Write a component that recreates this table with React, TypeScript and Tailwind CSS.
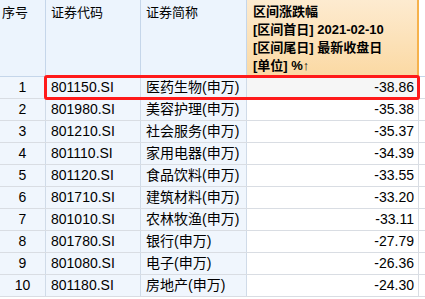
const rows = [
  ['1', '801150.SI', '医药生物(申万)', '-38.86'],
  ['2', '801980.SI', '美容护理(申万)', '-35.38'],
  ['3', '801210.SI', '社会服务(申万)', '-35.37'],
  ['4', '801110.SI', '家用电器(申万)', '-34.39'],
  ['5', '801120.SI', '食品饮料(申万)', '-33.55'],
  ['6', '801710.SI', '建筑材料(申万)', '-33.20'],
  ['7', '801010.SI', '农林牧渔(申万)', '-33.11'],
  ['8', '801780.SI', '银行(申万)', '-27.79'],
  ['9', '801080.SI', '电子(申万)', '-26.36'],
  ['10', '801180.SI', '房地产(申万)', '-24.30'],
];

export default function App() {
  return (
    <div
      className="relative w-[425px] h-[299px] overflow-hidden bg-white text-black"
      style={{ fontFamily: 'Tahoma, "Liberation Sans", "Noto Sans CJK SC", sans-serif' }}
    >
      {/* 表头 */}
      <div className="flex h-[77px] border-b border-[#c5d6ea] text-[13px]">
        <div className="w-[46px] bg-[#ecf4fd] border-r border-[#c5d6ea] pl-[2px] pt-[3px]">序号</div>
        <div className="w-[95px] bg-[#ecf4fd] border-r border-[#c5d6ea] pl-[5px] pt-[3px]">证券代码</div>
        <div className="w-[106px] bg-[#ecf4fd] border-r border-[#c5d6ea] pl-[5px] pt-[3px]">证券简称</div>
        <div className="w-[172px] bg-gradient-to-b from-[#fdebd0] to-[#fbd9a3] border-r-2 border-[#f6b24c] pl-[6px] pt-[3px] font-bold leading-[18px]">
          <div>区间涨跌幅</div>
          <div>[区间首日] 2021-02-10</div>
          <div>[区间尾日] 最新收盘日</div>
          <div>[单位] %↑</div>
        </div>
        <div className="flex-1 bg-white" />
      </div>

      {/* 数据行 */}
      {rows.map((r) => (
        <div key={r[0]} className="flex h-[22px] border-b border-[#d9dde3] text-[14px] leading-[21px]">
          <div className="w-[46px] bg-[#f0f6fd] border-r border-[#d0dbe8] text-center">{r[0]}</div>
          <div className="w-[95px] bg-[#f0f6fd] border-r border-[#d0dbe8] pl-[5px]">{r[1]}</div>
          <div className="w-[106px] bg-[#f0f6fd] border-r border-[#d0dbe8] pl-[5px] whitespace-nowrap">{r[2]}</div>
          <div className={`w-[172px] border-r border-[#d9dde3] text-right pr-[4px] ${r[0] === '1' ? 'bg-[#f6f6f6]' : 'bg-white'}`}>{r[3]}</div>
          <div className="flex-1 bg-white" />
        </div>
      ))}

      {/* 红色标记框 */}
      <div className="absolute left-[44px] top-[75px] w-[376px] h-[25px] border-[3px] border-[#ff1a1a] rounded-[3px]" />
    </div>
  );
}
